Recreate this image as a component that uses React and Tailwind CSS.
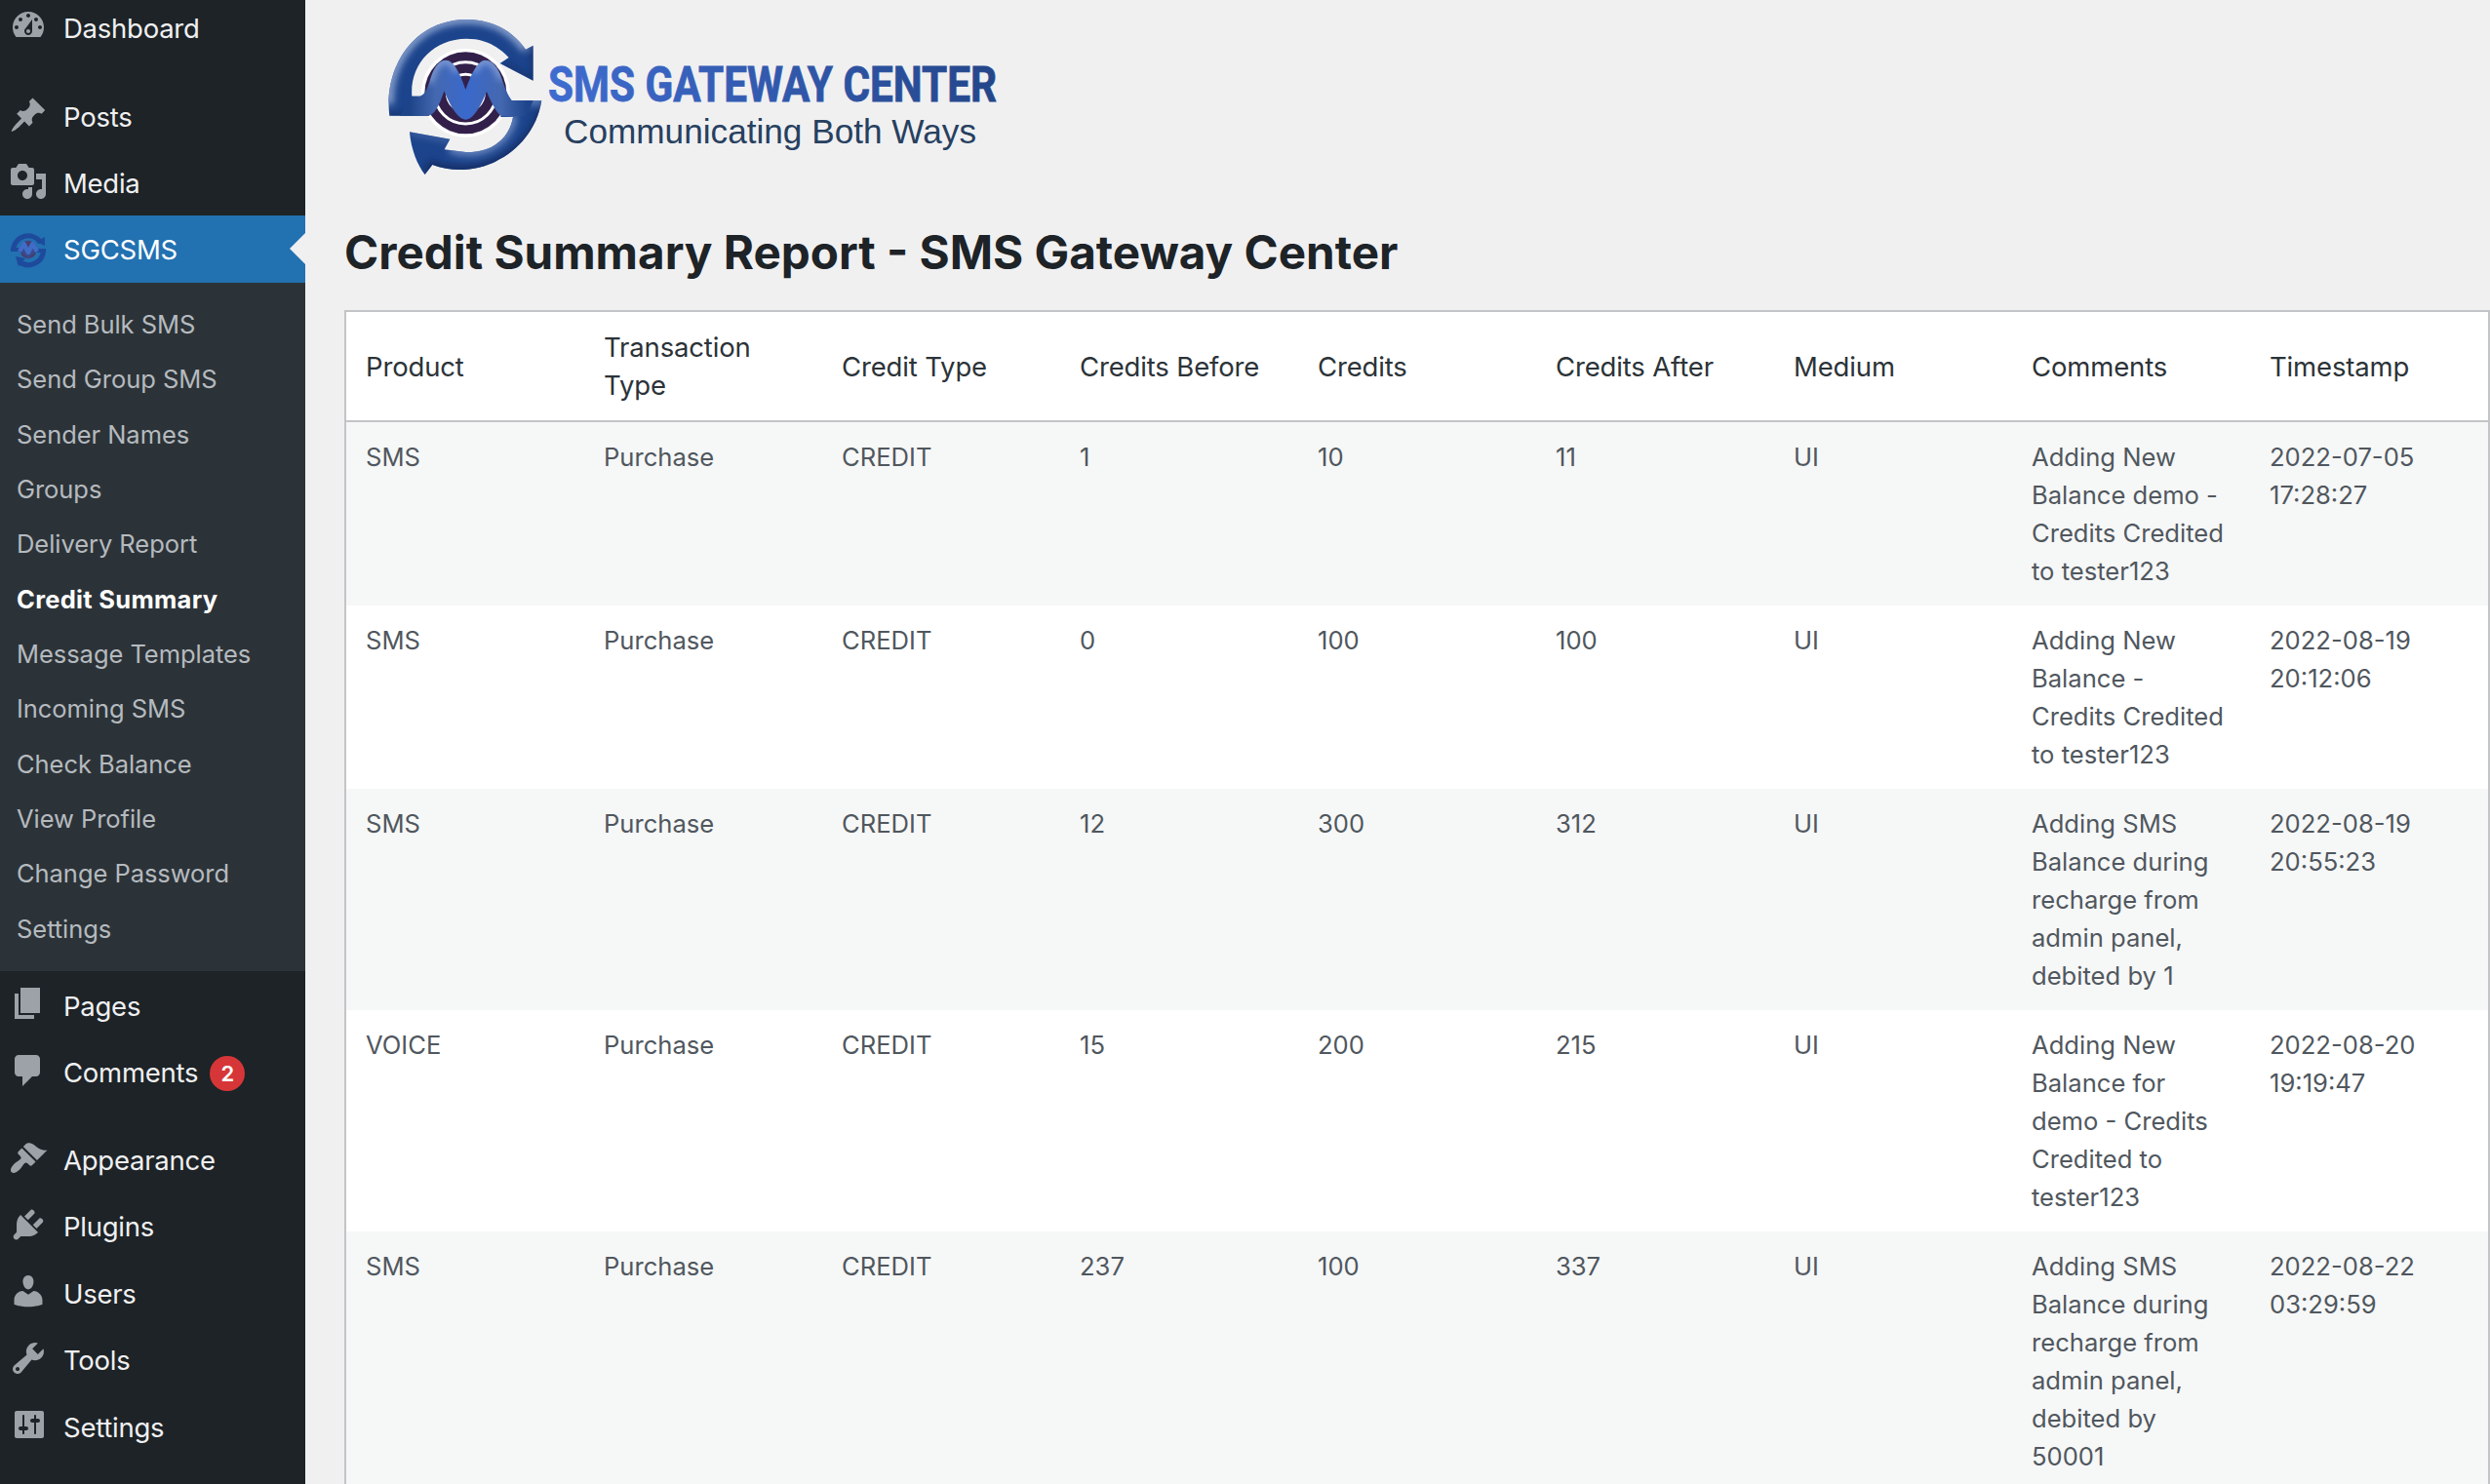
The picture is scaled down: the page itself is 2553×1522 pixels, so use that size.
const ICONS = {
  dashboard: "M3.76 16h12.48C17.34 14.63 18 12.89 18 11c0-4.41-3.58-8-8-8s-8 3.59-8 8c0 1.89.66 3.63 1.76 5zM10 4c.55 0 1 .45 1 1s-.45 1-1 1-1-.45-1-1 .45-1 1-1zM6 6c.55 0 1 .45 1 1s-.45 1-1 1-1-.45-1-1 .45-1 1-1zm8 0c.55 0 1 .45 1 1s-.45 1-1 1-1-.45-1-1 .45-1 1-1zm-5.37 5.55L12 7v6c0 1.1-.9 2-2 2s-2-.9-2-2c0-.57.24-1.08.63-1.45zM4 10c.55 0 1 .45 1 1s-.45 1-1 1-1-.45-1-1 .45-1 1-1zm12 0c.55 0 1 .45 1 1s-.45 1-1 1-1-.45-1-1 .45-1 1-1zm-5 3c0-.55-.45-1-1-1s-1 .45-1 1 .45 1 1 1 1-.45 1-1z",
  posts: "M10.44 3.02l1.82-1.82 6.36 6.35-1.83 1.82c-1.05-.68-2.48-.57-3.41.36l-.75.75c-.92.93-1.04 2.35-.35 3.41l-1.83 1.82-2.41-2.41-2.8 2.79c-.42.42-3.38 2.71-3.8 2.29s1.86-3.39 2.28-3.81l2.79-2.79L4.1 9.36l1.83-1.82c1.05.69 2.48.57 3.4-.36l.75-.75c.93-.92 1.05-2.35.36-3.41z",
  media: "M13 11V4c0-.55-.45-1-1-1h-1.67L9 1H5L3.67 3H2c-.55 0-1 .45-1 1v7c0 .55.45 1 1 1h10c.55 0 1-.45 1-1zM7 4.5c1.38 0 2.5 1.12 2.5 2.5S8.38 9.5 7 9.5 4.5 8.38 4.5 7 5.62 4.5 7 4.5zM14 6h5v10.5c0 1.38-1.12 2.5-2.5 2.5S14 17.88 14 16.5s1.12-2.5 2.5-2.5c.17 0 .34.02.5.05V9h-3V6zm-4 8.05V13h2v3.5c0 1.38-1.12 2.5-2.5 2.5S7 17.88 7 16.5 8.12 14 9.5 14c.17 0 .34.02.5.05z",
  pages: "M6 15V2h10v13H6zm-1 1h8v2H3V5h2v11z",
  comments: "M5 2h9c1.1 0 2 .9 2 2v7c0 1.1-.9 2-2 2h-2l-5 5v-5H5c-1.1 0-2-.9-2-2V4c0-1.1.9-2 2-2z",
  appearance: "M14.48 11.06L7.41 3.99l1.5-1.5c.5-.56 2.3-.47 3.51.32 1.21.8 1.43 1.28 2.91 2.1 1.18.64 2.45 1.26 4.45.85zm-.71.71L6.7 4.7 4.93 6.47c-.39.39-.39 1.02 0 1.41l1.06 1.06c.39.39.39 1.03 0 1.42-.6.6-1.43 1.11-2.21 1.69-.35.26-.7.53-1.01.84C1.43 14.23.4 16.08 1.4 17.07c.99 1 2.84-.03 4.18-1.36.31-.31.58-.66.85-1.02.57-.78 1.08-1.61 1.69-2.21.39-.39 1.02-.39 1.41 0l1.06 1.06c.39.39 1.02.39 1.41 0z",
  plugins: "M13.11 4.36L9.87 7.6 8 5.73l3.24-3.24c.35-.34 1.05-.2 1.56.32.52.51.66 1.21.31 1.55zm-8 1.77l.91-1.12 9.01 9.01-1.19.84c-.71.71-2.63 1.16-3.82 1.16H6.14L4.9 17.26c-.59.59-1.54.59-2.12 0-.59-.58-.59-1.53 0-2.12l1.24-1.24v-3.88c0-1.13.4-3.19 1.09-3.89zm7.26 3.97l3.24-3.24c.34-.35 1.04-.21 1.55.31.52.51.66 1.21.31 1.55l-3.24 3.25z",
  users: "M10 9.25c-2.27 0-2.73-3.44-2.73-3.44C7 4.02 7.82 2 9.97 2c2.16 0 2.98 2.02 2.71 3.81 0 0-.41 3.44-2.68 3.44zm0 2.57L12.72 10c2.39 0 4.52 2.33 4.52 4.53v2.49s-3.65 1.13-7.24 1.13c-3.65 0-7.24-1.13-7.24-1.13v-2.49c0-2.25 1.94-4.48 4.47-4.48z",
  tools: "M16.68 9.77c-1.34 1.34-3.3 1.67-4.95.99l-5.41 6.52c-.99.99-2.59.99-3.58 0s-.99-2.59 0-3.57l6.52-5.42c-.68-1.65-.35-3.61.99-4.95 1.28-1.28 3.12-1.62 4.72-1.06l-2.89 2.89 2.82 2.82 2.86-2.87c.53 1.58.18 3.39-1.08 4.65zM3.81 16.21c.4.39 1.04.39 1.43 0 .4-.4.4-1.04 0-1.43-.39-.4-1.03-.4-1.43 0-.39.39-.39 1.03 0 1.43z",
  settings: "M18 16V4c0-.55-.45-1-1-1H4c-.55 0-1 .45-1 1v12c0 .55.45 1 1 1h13c.55 0 1-.45 1-1zM8 11h1c.55 0 1 .45 1 1s-.45 1-1 1H8v1.5c0 .28-.22.5-.5.5s-.5-.22-.5-.5V13H6c-.55 0-1-.45-1-1s.45-1 1-1h1V5.5c0-.28.22-.5.5-.5s.5.22.5.5V11zm5-2h-1c-.55 0-1-.45-1-1s.45-1 1-1h1V5.5c0-.28.22-.5.5-.5s.5.22.5.5V7h1c.55 0 1 .45 1 1s-.45 1-1 1h-1v5.5c0 .28-.22.5-.5.5s-.5-.22-.5-.5V9z",
};

const SUBMENU = [
  "Send Bulk SMS", "Send Group SMS", "Sender Names", "Groups", "Delivery Report", "Credit Summary",
  "Message Templates", "Incoming SMS", "Check Balance", "View Profile", "Change Password", "Settings",
];

const HEADERS = ["Product", "Transaction Type", "Credit Type", "Credits Before", "Credits", "Credits After", "Medium", "Comments", "Timestamp"];

const ROWS = [
  ["SMS", "Purchase", "CREDIT", "1", "10", "11", "UI", "Adding New\nBalance demo -\nCredits Credited\nto tester123", "2022-07-05\n17:28:27"],
  ["SMS", "Purchase", "CREDIT", "0", "100", "100", "UI", "Adding New\nBalance -\nCredits Credited\nto tester123", "2022-08-19\n20:12:06"],
  ["SMS", "Purchase", "CREDIT", "12", "300", "312", "UI", "Adding SMS\nBalance during\nrecharge from\nadmin panel,\ndebited by 1", "2022-08-19\n20:55:23"],
  ["VOICE", "Purchase", "CREDIT", "15", "200", "215", "UI", "Adding New\nBalance for\ndemo - Credits\nCredited to\ntester123", "2022-08-20\n19:19:47"],
  ["SMS", "Purchase", "CREDIT", "237", "100", "337", "UI", "Adding SMS\nBalance during\nrecharge from\nadmin panel,\ndebited by\n50001", "2022-08-22\n03:29:59"],
];

function MenuItem({ icon, label, children }) {
  return (
    <a className="flex h-[68.4px] shrink-0 items-start pl-[9px] pt-[13px]">
      <svg viewBox="0 0 20 20" className="size-10 shrink-0 fill-[#9ca2a7]"><path d={ICONS[icon]} /></svg>
      <span className="ml-[16px] mt-[2.4px] text-[27.5px] font-[430] leading-[40px] tracking-[-0.25px] text-[#f0f0f1]">{label}</span>
      {children}
    </a>
  );
}

const TOP_ARROW = "M28 326 C10 180 100 30 266 30 C350 30 410 70 447 122 L470 110 V218 L368 165 L395 147 C360 110 320 89 265 89 C160 90 90 170 97 266 H140 L150 326 Z";
const BOTTOM_ARROW = "M370 330 H408 C396 400 340 440 262 438 L197 430 L214 398 L90 376 C94 430 115 480 137 507 L160 477 C300 530 470 440 496 280 H380 Z";
const M_SHAPE = "M96 266 H122 Q138 262 150 226 Q168 155 202 155 Q232 155 262 246 Q294 155 322 155 Q354 155 374 214 Q390 262 404 279 H470 L450 328 H376 Q358 326 327 252 Q292 338 262 338 Q232 338 196 250 Q172 326 146 326 H60 Z";

function Mark({ id, className }) {
  return (
    <svg viewBox="0 0 540 540" className={className}>
      <defs>
        <linearGradient id={id + "m"} gradientUnits="userSpaceOnUse" x1="90" y1="0" x2="450" y2="0">
          <stop offset="0" stopColor="#1d4388" /><stop offset="0.22" stopColor="#4468b0" /><stop offset="0.48" stopColor="#3a69cc" /><stop offset="0.78" stopColor="#4468b0" /><stop offset="1" stopColor="#1e458c" />
        </linearGradient>
        <filter id={id + "f"} x="-20%" y="-20%" width="140%" height="140%"><feGaussianBlur stdDeviation="11" /></filter>
        <clipPath id={id + "t"}><path d={TOP_ARROW} /></clipPath>
        <clipPath id={id + "b"}><path d={BOTTOM_ARROW} /></clipPath>
        <clipPath id={id + "c"}><path d={M_SHAPE} /></clipPath>
      </defs>
      <circle cx="262" cy="256" r="136" fill="#fff" />
      <circle cx="262" cy="256" r="126" fill="#33204a" />
      <circle cx="262" cy="256" r="95" fill="none" stroke="#fff" strokeWidth="9" />
      <circle cx="262" cy="256" r="57" fill="none" stroke="#fff" strokeWidth="9" />
      <path fill="#1c448c" d={BOTTOM_ARROW} />
      <g clipPath={"url(#" + id + "b)"}>
        <g filter={"url(#" + id + "f)"} fill="none">
          <path d="M137 507 L160 477 C300 530 470 440 496 300" stroke="#122c60" strokeWidth="22" />
          <path d="M214 430 C320 460 400 400 410 325" stroke="#6f8cc4" strokeWidth="22" />
          <path d="M380 280 H496" stroke="#5f7fbd" strokeWidth="24" />
          <path d="M90 376 L214 400" stroke="#4b6cab" strokeWidth="14" />
        </g>
      </g>
      <path fill="#1c448c" d={TOP_ARROW} />
      <g clipPath={"url(#" + id + "t)"}>
        <g filter={"url(#" + id + "f)"} fill="none">
          <path d="M28 290 C20 170 110 30 266 30 C350 30 410 70 447 122" stroke="#8aa3d0" strokeWidth="26" />
          <path d="M470 110 V218 L380 165" stroke="#14326c" strokeWidth="14" />
          <path d="M28 326 H150" stroke="#14326c" strokeWidth="18" />
        </g>
      </g>
      <path fill={"url(#" + id + "m)"} d={M_SHAPE} />
      <g clipPath={"url(#" + id + "c)"}>
        <g filter={"url(#" + id + "f)"} fill="none" stroke="#8ba6da" strokeWidth="18">
          <path d="M150 226 Q168 155 202 155 Q220 155 236 190" />
          <path d="M286 190 Q304 155 322 155 Q354 155 374 214" />
        </g>
      </g>
    </svg>
  );
}

function MenuMark() {
  return (
    <svg viewBox="0 0 40 40" className="size-10 shrink-0">
      <g fill="none" stroke="#1e4a9c" strokeWidth="5">
        <path d="M4.500 21 A15.500 15.500 0 0 1 33 14" />
        <path d="M35.500 22 A15.500 15.500 0 0 1 10 33" />
      </g>
      <path fill="#1e4a9c" d="M37 8 V17 L28 13 Z M7 28 L17 30 L10 38 Z M2 19 H11 V23 H2 Z M29 20 H38 V24 H29 Z" />
      <circle cx="20" cy="20.500" r="9" fill="#3a4a8c" />
      <path fill="#4b3c6b" d="M16 13 H24 L20 18 Z M12 23 L20 30 L28 23 L26 28 L20 30.500 L14 28 Z" />
      <path fill="none" stroke="#3f6cc6" strokeWidth="4.500" strokeLinejoin="round" d="M11 23 L15.500 15 L20 24 L24.500 15 L29 23" />
    </svg>
  );
}

function Logo() {
  return (
    <div className="flex h-[180px] shrink-0 items-start">
      <Mark id="logo" className="size-[180px] shrink-0" />
      <svg viewBox="560 10 470 170" className="-ml-[10px] h-[170px] w-[470px] shrink-0 overflow-visible">
        <defs>
          <linearGradient id="title" x1="0" x2="1"><stop offset="0" stopColor="#3f6cd0" /><stop offset="1" stopColor="#24468a" /></linearGradient>
        </defs>
        <text x="562" y="104" textLength="460" lengthAdjust="spacingAndGlyphs" fontFamily="Roboto" fontWeight="700" fontSize="50" fill="url(#title)" stroke="url(#title)" strokeWidth="0.8">SMS GATEWAY CENTER</text>
        <text x="578" y="146.500" textLength="423" lengthAdjust="spacingAndGlyphs" fontFamily="Liberation Sans" fontSize="34.5" fill="#27405f">Communicating Both Ways</text>
      </svg>
    </div>
  );
}

export default function App() {
  return (
    <div className="flex h-[1522px] w-[2553px] overflow-hidden bg-[#f0f0f1] font-['Inter',sans-serif]">
      <nav className="flex w-[313px] shrink-0 flex-col bg-[#1d2327]">
        <div className="-mt-[6.6px] mb-[22.8px] flex flex-col"><MenuItem icon="dashboard" label="Dashboard" /></div>
        <MenuItem icon="posts" label="Posts" />
        <MenuItem icon="media" label="Media" />
        <a className="relative flex h-[69px] shrink-0 items-start bg-[#2271b1] pl-[9px] pt-[14px]">
          <MenuMark />
          <span className="ml-[16px] mt-px text-[27.5px] font-[430] leading-[40px] tracking-[-0.25px] text-white">SGCSMS</span>
          <span className="absolute right-0 top-[18px] border-y-[16px] border-r-[16px] border-y-transparent border-r-[#f0f0f1]" />
        </a>
        <div className="flex h-[706px] shrink-0 flex-col bg-[#2c3338] pl-[17px] pt-[14.6px]">
          {SUBMENU.map((s) => (
            <a key={s} className={"h-[56.35px] shrink-0 text-[25.5px] leading-[56px] " + (s === "Credit Summary" ? "font-bold tracking-[0.3px] text-white" : "font-[430] tracking-[-0.05px] text-[#b5babf]")}>{s}</a>
          ))}
        </div>
        <MenuItem icon="pages" label="Pages" />
        <MenuItem icon="comments" label="Comments">
          <span className="ml-[12px] mt-[5px] size-9 rounded-full bg-[#d63638] text-center text-[22px] font-semibold leading-9 text-white">2</span>
        </MenuItem>
        <div className="h-[21.5px] shrink-0" />
        <MenuItem icon="appearance" label="Appearance" />
        <MenuItem icon="plugins" label="Plugins" />
        <MenuItem icon="users" label="Users" />
        <MenuItem icon="tools" label="Tools" />
        <MenuItem icon="settings" label="Settings" />
      </nav>
      <main className="flex w-[2240px] flex-col pl-[40px] pt-[10px]">
        <div className="shrink-0 pl-[37px]"><Logo /></div>
        <h1 className="mt-[39px] h-[89px] shrink-0 whitespace-nowrap text-[47.6px] font-bold leading-[60px] text-[#1d2327]">Credit Summary Report - SMS Gateway Center</h1>
        <div className="w-[2200px] shrink-0 border-2 border-[#c3c4c7] bg-white">
          <div className="grid h-[113px] grid-cols-[repeat(9,244px)] items-center border-b-2 border-[#c3c4c7] pt-px">
            {HEADERS.map((h) => (
              <div key={h} className="pl-5 pr-5 text-[27.5px] font-[430] leading-[39px] tracking-[-0.15px] text-[#2c3338]">{h}</div>
            ))}
          </div>
          {ROWS.map((r, i) => (
            <div key={i} className={"grid grid-cols-[repeat(9,244px)] py-4 " + (i % 2 ? "bg-white" : "bg-[#f6f7f7]")}>
              {r.map((c, j) => (
                <div key={j} className="whitespace-pre pl-5 text-[25.6px] font-[430] leading-[39px] text-[#50575e]">{c}</div>
              ))}
            </div>
          ))}
        </div>
      </main>
    </div>
  );
}
